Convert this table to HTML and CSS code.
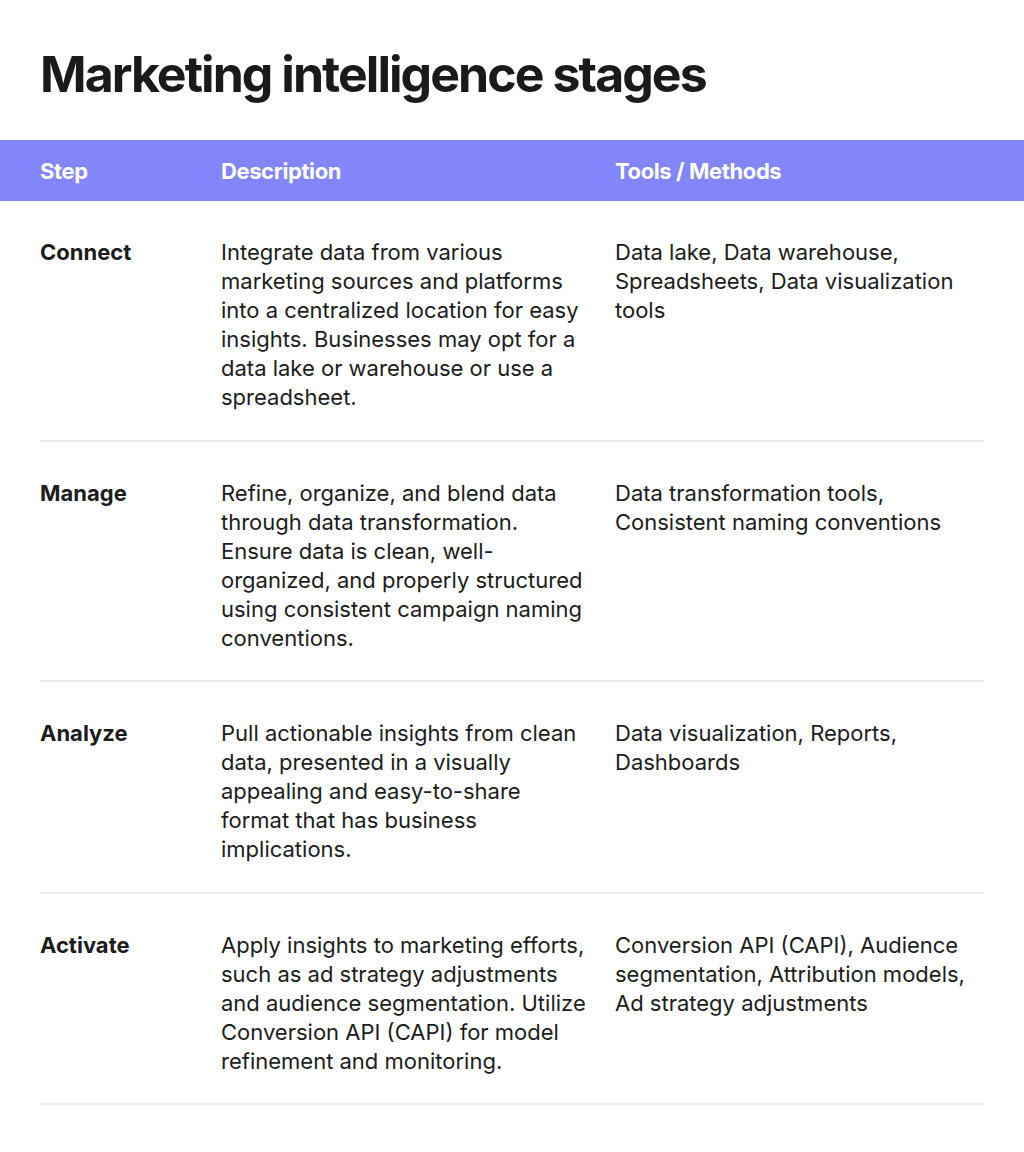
FILE: index.html
```html
<!DOCTYPE html>
<html lang="en">
<head>
<meta charset="utf-8">
<title>Marketing intelligence stages</title>
<link rel="stylesheet" href="styles.css">
</head>
<body>
<h1 class="title">Marketing intelligence stages</h1>
<div class="table">
  <div class="head">
    <div class="col-step">Step</div>
    <div class="col-desc">Description</div>
    <div class="col-tools">Tools / Methods</div>
  </div>
  <div class="body">
    <div class="row">
      <div class="col-step step">Connect</div>
      <div class="col-desc">Integrate data from various marketing sources and platforms into a centralized location for easy insights. Businesses may opt for a data lake or warehouse or use a spreadsheet.</div>
      <div class="col-tools">Data lake, Data warehouse, Spreadsheets, Data visualization tools</div>
    </div>
    <div class="row">
      <div class="col-step step">Manage</div>
      <div class="col-desc">Refine, organize, and blend data through data transformation. Ensure data is clean, well-organized, and properly structured using consistent campaign naming conventions.</div>
      <div class="col-tools">Data transformation tools, Consistent naming conventions</div>
    </div>
    <div class="row">
      <div class="col-step step">Analyze</div>
      <div class="col-desc">Pull actionable insights from clean data, presented in a visually appealing and easy-to-share format that has business implications.</div>
      <div class="col-tools">Data visualization, Reports, Dashboards</div>
    </div>
    <div class="row">
      <div class="col-step step">Activate</div>
      <div class="col-desc">Apply insights to marketing efforts, such as ad strategy adjustments and audience segmentation. Utilize Conversion API (CAPI) for model refinement and monitoring.</div>
      <div class="col-tools">Conversion API (CAPI), Audience segmentation, Attribution models, Ad strategy adjustments</div>
    </div>
  </div>
</div>
</body>
</html>
```
FILE: styles.css
```css
* { box-sizing: border-box; }
html, body { margin: 0; padding: 0; background: #ffffff; }
body {
  font-family: Inter, "Liberation Sans", Arial, sans-serif;
  color: #1c1c1c;
  width: 1024px;
}
.title {
  margin: 0;
  padding: 44px 40px 0 40px;
  height: 140px;
  font-size: 50px;
  line-height: 60px;
  font-weight: 700;
  letter-spacing: -1.95px;
  color: #1a1a1a;
}
.head {
  display: grid;
  grid-template-columns: 181px 394px 1fr;
  align-items: center;
  height: 61px;
  padding: 0 40px;
  background: #8286fa;
  color: #ffffff;
  font-size: 22px;
  font-weight: 700;
  letter-spacing: -0.4px;
}
.body { padding: 0 40px; }
.row {
  display: grid;
  grid-template-columns: 181px 394px 1fr;
  padding: 37px 0 27.5px 0;
  border-bottom: 2px solid #ebebeb;
  font-size: 22px;
  line-height: 29px;
  letter-spacing: 0;
}
.col-desc { padding-right: 28px; }
.step { font-weight: 700; }
```
